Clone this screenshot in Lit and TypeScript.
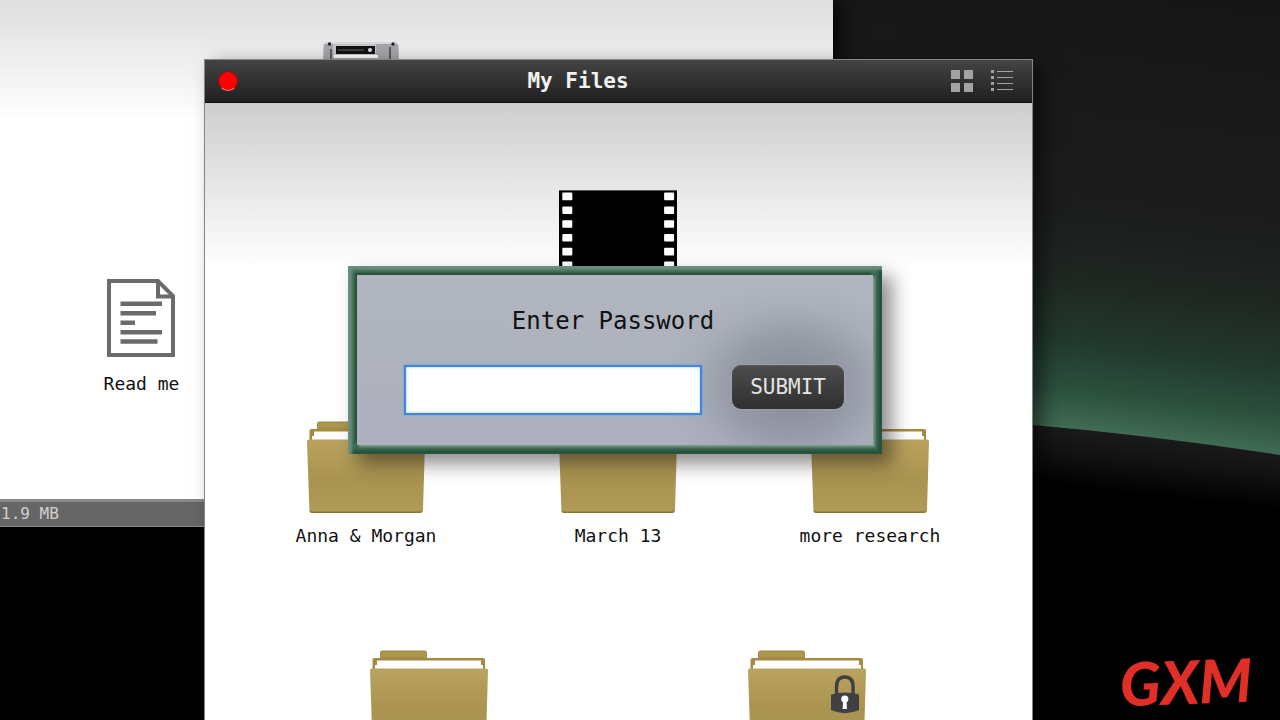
import { LitElement, html, svg, css, nothing } from "lit";
import { customElement, property } from "lit/decorators.js";

type FileKind = "folder" | "locked" | "film" | "document" | "cassette";

interface FileEntry {
  kind: FileKind;
  label?: string;
}

const rows: FileEntry[][] = [
  [{ kind: "film" }],
  [
    { kind: "folder", label: "Anna & Morgan" },
    { kind: "folder", label: "March 13" },
    { kind: "folder", label: "more research" },
  ],
  [{ kind: "folder" }, { kind: "locked" }],
];

const lock = svg`
  <path d="M88.5 47V39c0-7 3.5-10 8.3-10s8.3 3 8.3 10v8" fill="none" stroke="#403f42" stroke-width="3.4"/>
  <path d="M83 46.500q14-4 28 0V62q-14 6.500-28 0Z" fill="#403f42"/>
  <circle cx="96.800" cy="51" r="3.600" fill="#fff"/>
  <path d="M95.200 52h3.200l.6 9h-4.400Z" fill="#fff"/>`;

const folder = (locked: boolean) => html`
  <svg width="118" height="94" viewBox="0 0 118 94" aria-hidden="true">
    <defs>
      <linearGradient id="front" x1="0" y1="0" x2="0" y2="1">
        <stop offset="0" stop-color="#baa35e" />
        <stop offset=".55" stop-color="#aa9350" />
        <stop offset="1" stop-color="#b09a57" />
      </linearGradient>
    </defs>
    <path d="M2.500 24V12q0-2 2-2H10V5q0-2.500 2.500-2.500h42Q57 2.500 57 5v5h56q2 0 2 2v12Z" fill="#a38b43" />
    <path d="M11 9V6q0-2 2-2h41q2 0 2 2v3Z" fill="#ad9650" />
    <path d="M5 22V17h2v-4.500h104V17h2v5Z" fill="#fff" />
    <path d="M2 20.500h114q2 0 2 2L116 91q0 3-3 3H5q-2.500 0-2.600-3L0 22.500q0-2 2-2Z" fill="url(#front)" />
    <path d="M2.500 91q0 3 3 3h107q3 0 3-3-1 1.500-3 1.500H5.500q-2 0-3-1.500Z" fill="#8c7432" />
    ${locked ? lock : nothing}
  </svg>`;

const film = () => html`
  <svg width="118" height="94" viewBox="0 0 118 94" aria-hidden="true">
    <rect width="118" height="94" fill="#000" />
    <rect width="118" height="1" fill="#555" />
    ${[0, 1, 2, 3, 4, 5].map(
      (i) => svg`
        <rect x="3.300" y=${2.600 + i * 13.8} width="10" height="7.600" rx="1" fill="#fff"/>
        <rect x="105.100" y=${2.600 + i * 13.8} width="10" height="7.600" rx="1" fill="#fff"/>`
    )}
  </svg>`;

const documentIcon = () => html`
  <svg width="68" height="78" viewBox="0 0 68 78" aria-hidden="true">
    <path d="M2 2H51L66 17V76H2Z" fill="#fff" stroke="#6b6b6b" stroke-width="4" />
    <path d="M51 2V17.500H66" fill="none" stroke="#6b6b6b" stroke-width="4" />
    <path
      d="M13.500 24.800H55M13.500 34.200H49M13.500 43.700H28M13.500 53.200H55M13.500 62.500H50.500"
      stroke="#6b6b6b"
      stroke-width="4.400"
    />
  </svg>`;

const cassette = () => html`
  <svg width="78" height="60" viewBox="0 0 78 60" aria-hidden="true">
    <path d="M6 1H72q4 0 4.500 5L78 60H0L1.500 6Q2 1 6 1Z" fill="#a4a4aa" />
    <path d="M6 1H72q2 0 3.500 2H2.500Q4 1 6 1Z" fill="#d9d9dc" />
    <rect x="11" y="3" width="43" height="14" fill="#c6c6ca" />
    <rect x="14" y="5" width="39" height="8" fill="#111" />
    <rect x="16" y="8" width="26" height="2" fill="#3c3c3e" />
    <rect x="46" y="7" width="4" height="4" rx="2" fill="#ddd" />
    <rect x="12" y="14" width="44" height="3" fill="#fff" />
    <circle cx="7.500" cy="3" r="1.700" fill="#222" />
    <circle cx="71" cy="3" r="1.700" fill="#222" />
    <path d="M9 8V18M68 6V18" stroke="#444" stroke-width="1.500" />
  </svg>`;

@customElement("file-item")
class FileItem extends LitElement {
  @property() kind: FileKind = "folder";
  @property() label = "";

  static styles = css`
    :host {
      display: block;
    }
    .file {
      display: flex;
      flex-direction: column;
      align-items: center;
      gap: 12px;
      padding: 0;
      border: 0;
      background: none;
      color: #111;
      font: 18px/22px "DejaVu Sans Mono", monospace;
      white-space: nowrap;
    }
    .document {
      gap: 16px;
    }
    svg {
      display: block;
    }
  `;

  private icon() {
    switch (this.kind) {
      case "film":
        return film();
      case "document":
        return documentIcon();
      case "cassette":
        return cassette();
      default:
        return folder(this.kind === "locked");
    }
  }

  render() {
    return html`<button type="button" class="file ${this.kind}" aria-label=${this.label || this.kind}>
      ${this.icon()}${this.label ? html`<span>${this.label}</span>` : nothing}
    </button>`;
  }
}

@customElement("password-dialog")
class PasswordDialog extends LitElement {
  static styles = css`
    :host {
      display: block;
      padding: 9px;
      background: #3f6a54;
      box-shadow:
        inset 4px 4px 3px #6b8f7e,
        inset -4px -4px 3px #28523b,
        10px 10px 18px rgba(0, 0, 0, 0.45);
    }
    .panel {
      padding: 32px 29px 30px 47px;
      background: linear-gradient(#b0b5be, #adb0bd);
      box-shadow:
        -2px -2px 2px #284d39,
        2px 2px 2px #7ba08d;
    }
    .glow {
      position: absolute;
      inset: 9px;
      background: radial-gradient(
        ellipse 130px 105px at 84% 65%,
        rgba(70, 76, 92, 0.4),
        rgba(80, 86, 102, 0.26) 45%,
        rgba(100, 106, 124, 0.08) 75%,
        rgba(110, 116, 134, 0)
      );
    }
    .prompt {
      display: block;
      margin-right: 22px;
      color: #111;
      font: 24px/28px "DejaVu Sans Mono", monospace;
      text-align: center;
    }
    .fields {
      position: relative;
      display: grid;
      grid-template-columns: 1fr auto;
      align-items: start;
      gap: 30px;
      margin-top: 30px;
    }
    .password {
      box-sizing: border-box;
      width: 100%;
      height: 50px;
      padding: 0 12px;
      border: 2px solid #4189d8;
      outline: none;
      border-radius: 0;
      background: #fff;
      box-shadow:
        0 0 2px #5a9be0,
        inset 0 0 3px #8fc3f5;
      font: 24px/28px "DejaVu Sans Mono", monospace;
    }
    .submit {
      height: 44px;
      padding: 0 18px;
      border: 0;
      border-radius: 9px;
      background: linear-gradient(#4c4c4c, #303030);
      box-shadow:
        0 0 2px rgba(205, 208, 218, 0.6),
        inset 0 1px 1px #5c5c5c;
      color: #e4e4e4;
      font: 21px/24px "DejaVu Sans Mono", monospace;
    }
  `;

  render() {
    return html`
      <form class="panel" @submit=${(e: Event) => e.preventDefault()}>
        <div class="glow"></div>
        <label class="prompt" for="password">Enter Password</label>
        <div class="fields">
          <input class="password" id="password" type="password" autocomplete="off" />
          <button class="submit" type="submit">SUBMIT</button>
        </div>
      </form>
    `;
  }
}

@customElement("app-root")
class AppRoot extends LitElement {
  static styles = css`
    :host {
      position: relative;
      display: block;
      height: 100vh;
      overflow: hidden;
      background: #000;
      font-family: "DejaVu Sans Mono", monospace;
    }
    .wallpaper {
      position: absolute;
      inset: 0;
      width: 100%;
      height: 100%;
    }
    .back {
      position: absolute;
      inset: 0 447px auto 0;
      box-shadow: 4px 0 20px #000;
    }
    .shelf {
      display: grid;
      grid-template-columns: 219px 219px;
      grid-template-rows: 238px 220px;
      justify-items: center;
      padding: 41px 0 0 32px;
      background: linear-gradient(#dedede, #fff 120px);
    }
    .media {
      grid-column: 2;
    }
    .readme {
      grid-row: 2;
    }
    .status {
      padding: 1px 1px 2px;
      border-top: 3px solid #888;
      border-bottom: 1px solid #8c8c8c;
      background: #666;
      color: #d0d0d0;
      font-size: 16px;
      line-height: 21px;
    }
    .window {
      position: absolute;
      inset: 59px 247px 0 204px;
      display: flex;
      flex-direction: column;
      border: 1px solid #858585;
      border-bottom: 0;
      background: #fff;
      box-shadow: 10px 6px 18px rgba(0, 0, 0, 0.5);
    }
    .bar {
      display: grid;
      grid-template-columns: 1fr auto;
      align-items: center;
      height: 42px;
      border-bottom: 1px solid #111;
      background: linear-gradient(#444, #1f1f1f);
    }
    .close,
    .title {
      grid-area: 1 / 1;
    }
    .close {
      z-index: 1;
      width: 20px;
      height: 20px;
      margin-left: 13px;
      padding: 0;
      border: 1px solid #8e1410;
      border-bottom-color: #ff7d74;
      border-radius: 50%;
      background: #fe0000;
    }
    .title {
      margin: 0;
      color: #f2f2f2;
      font-size: 21px;
      line-height: 24px;
      text-align: center;
    }
    .tools {
      display: flex;
      gap: 18px;
      padding-right: 19px;
    }
    .tool {
      padding: 0;
      border: 0;
      background: none;
    }
    .tool svg {
      display: block;
    }
    .files {
      flex: 1;
      min-height: 0;
      overflow: hidden;
      padding: 87px 36px 0 35px;
      background: linear-gradient(#cecece, #fff 165px);
    }
    .row {
      display: flex;
      justify-content: space-around;
      height: 229px;
    }
    .cell {
      display: flex;
      justify-content: center;
      align-items: flex-start;
      width: 118px;
    }
    .dialog {
      position: absolute;
      top: 266px;
      left: 348px;
      right: 398px;
    }
    .brand {
      position: absolute;
      right: 24px;
      bottom: 3px;
      padding: 0 4px;
      color: #df2f26;
      font: italic 900 60px/72px Lato, sans-serif;
      transform: rotate(-2deg);
    }
  `;

  render() {
    return html`
      <svg class="wallpaper" viewBox="0 0 1280 720" preserveAspectRatio="none" aria-hidden="true">
        <defs>
          <linearGradient id="sky" gradientUnits="userSpaceOnUse" x1="1150" y1="0" x2="1094" y2="432">
            <stop offset="0" stop-color="#161616" />
            <stop offset=".5" stop-color="#1b1d1c" />
            <stop offset=".66" stop-color="#1f2722" />
            <stop offset=".8" stop-color="#22392d" />
            <stop offset=".91" stop-color="#2b503d" />
            <stop offset="1" stop-color="#416c55" />
          </linearGradient>
          <linearGradient id="ground" gradientUnits="userSpaceOnUse" x1="1150" y1="438" x2="1144" y2="495">
            <stop offset="0" stop-color="#1a1a1a" />
            <stop offset=".4" stop-color="#121212" />
            <stop offset="1" stop-color="#000" />
          </linearGradient>
        </defs>
        <rect x="830" width="450" height="460" fill="url(#sky)" />
        <path d="M830 412Q1060 421 1280 455V720H830Z" fill="url(#ground)" />
      </svg>

      <section class="back" aria-label="Disk">
        <div class="shelf">
          <file-item class="media" kind="cassette"></file-item>
          <file-item class="readme" kind="document" label="Read me"></file-item>
        </div>
        <div class="status">1.9 MB</div>
      </section>

      <section class="window" aria-labelledby="title">
        <header class="bar">
          <button class="close" type="button" aria-label="Close"></button>
          <h1 class="title" id="title">My Files</h1>
          <div class="tools">
            <button class="tool" type="button" aria-label="Grid view">
              <svg width="22" height="22" viewBox="0 0 22 22" fill="#a3a3a3">
                <path d="M0 0h9v9H0ZM13 0h9v9h-9ZM0 13h9v9H0ZM13 13h9v9h-9Z" />
              </svg>
            </button>
            <button class="tool" type="button" aria-label="List view">
              <svg width="22" height="22" viewBox="0 0 22 22" fill="#a3a3a3">
                <path d="M0 0h3v3H0ZM0 6h3v3H0ZM0 12h3v3H0ZM0 18h3v3H0Z" />
                <path d="M6 1h16v1H6ZM6 7h16v1H6ZM6 13h16v1H6ZM6 19h16v1H6Z" />
              </svg>
            </button>
          </div>
        </header>
        <div class="files">
          ${rows.map(
            (row) => html`<div class="row">
              ${row.map(
                (file) => html`<div class="cell">
                  <file-item kind=${file.kind} label=${file.label ?? ""}></file-item>
                </div>`
              )}
            </div>`
          )}
        </div>
      </section>

      <password-dialog class="dialog"></password-dialog>
      <div class="brand">GXM</div>
    `;
  }
}
